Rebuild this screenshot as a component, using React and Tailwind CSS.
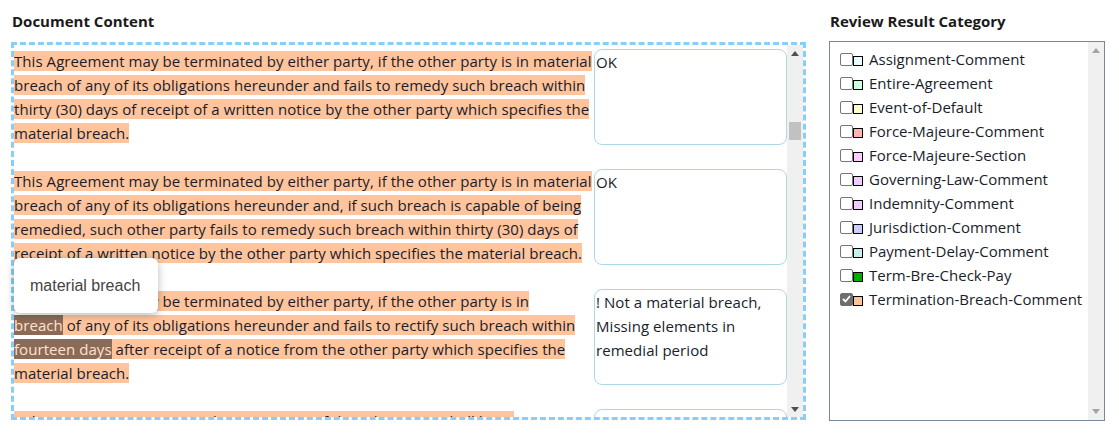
import React from "react";

const paragraphs = [
  {
    lines: [
      [{ t: "This Agreement may be terminated by either party, if the other party is in material" }],
      [{ t: "breach of any of its obligations hereunder and fails to remedy such breach within" }],
      [{ t: "thirty (30) days of receipt of a written notice by the other party which specifies the" }],
      [{ t: "material breach." }],
    ],
    comment: "OK",
  },
  {
    lines: [
      [{ t: "This Agreement may be terminated by either party, if the other party is in material" }],
      [{ t: "breach of any of its obligations hereunder and, if such breach is capable of being" }],
      [{ t: "remedied, such other party fails to remedy such breach within thirty (30) days of" }],
      [{ t: "receipt of a written notice by the other party which specifies the material breach." }],
    ],
    comment: "OK",
  },
  {
    lines: [
      [{ t: "This Agreement may be terminated by either party, if the other party is in" }],
      [
        { t: "breach", mark: true },
        { t: " of any of its obligations hereunder and fails to rectify such breach within" },
      ],
      [
        { t: "fourteen days", mark: true },
        { t: " after receipt of a notice from the other party which specifies the" },
      ],
      [{ t: "material breach." }],
    ],
    comment: "! Not a material breach,\nMissing elements in\nremedial period",
  },
  {
    lines: [
      [{ t: "Either party may terminate this Agreement if the other party shall be in" }],
      [{ t: "material breach of any of its obligations under this Agreement and fails to" }],
    ],
    comment: "! Not a material breach, Missing\nelements in",
  },
];

const categories = [
  { name: "Assignment-Comment", color: "#e6ffff" },
  { name: "Entire-Agreement", color: "#ccffdd" },
  { name: "Event-of-Default", color: "#ffffcc" },
  { name: "Force-Majeure-Comment", color: "#ffb3b3" },
  { name: "Force-Majeure-Section", color: "#ffccff" },
  { name: "Governing-Law-Comment", color: "#eeccff" },
  { name: "Indemnity-Comment", color: "#f3ccff" },
  { name: "Jurisdiction-Comment", color: "#ccccff" },
  { name: "Payment-Delay-Comment", color: "#c6efef" },
  { name: "Term-Bre-Check-Pay", color: "#00aa00" },
  { name: "Termination-Breach-Comment", color: "#ffc499", checked: true },
];

const Arrow = ({ up, color }) => (
  <svg width="8" height="5" viewBox="0 0 8 5">
    <path d={up ? "M0 5 L4 0 L8 5 Z" : "M0 0 L4 5 L8 0 Z"} fill={color} />
  </svg>
);

const Paragraph = ({ p }) => (
  <div className="flex h-[96px] mb-[24px] shrink-0">
    <div className="w-[580px] shrink-0 whitespace-nowrap leading-[24px] tracking-[0.06px]">
      {p.lines.map((line, i) => (
        <div key={i} className="h-[24px]">
          {line.map((s, j) =>
            s.mark ? (
              <span key={j} className="bg-[#8c6a58] text-[#ffe2cf]">
                {s.t}
              </span>
            ) : (
              <span key={j} className="bg-[#ffc49b]">
                {s.t}
              </span>
            )
          )}
        </div>
      ))}
    </div>
    <textarea
      readOnly
      value={p.comment}
      className="w-[193px] h-[96px] shrink-0 resize-none overflow-hidden rounded-[8px] border border-[#add8e6] px-[1px] py-0 leading-[24px] tracking-[0.06px] text-[#1a1d2b] outline-none"
    />
  </div>
);

export default function App() {
  return (
    <div className="flex w-[1119px] h-[434px] bg-white pt-[11px] font-['Open_Sans',sans-serif] text-[15px] text-[#1a1d2b]">
      {/* Document */}
      <div className="ml-[11px] w-[795px] shrink-0">
        <div className="h-5 leading-5 pl-[1px] font-bold text-[#1a1a1a]">Document Content</div>
        <div className="relative mt-[11px] flex h-[378px] border-[3px] border-dashed border-[#87cefa]">
          <div className="flex-1 flex flex-col overflow-hidden pt-[4px]">
            {paragraphs.map((p, i) => (
              <Paragraph key={i} p={p} />
            ))}
          </div>
          <div className="w-[16px] shrink-0 bg-[#f0f0f0] flex flex-col items-center">
            <div className="h-[16px] flex items-center justify-center">
              <Arrow up color="#505050" />
            </div>
            <div className="mt-[61px] h-[18px] w-[12px] bg-[#c1c1c1]" />
            <div className="flex-1" />
            <div className="h-[16px] flex items-center justify-center">
              <Arrow color="#505050" />
            </div>
          </div>
          {/* hover tooltip */}
          <div className="absolute left-0 top-[213px] w-[144px] h-[55px] rounded-[6px] bg-white shadow-[0_2px_8px_rgba(0,0,0,0.28)] flex items-center pl-[16px] font-['Liberation_Sans',Arial,sans-serif] text-[16px] text-[#444]">
            material breach
          </div>
        </div>
      </div>

      {/* Categories */}
      <div className="ml-[23px] w-[276px] shrink-0">
        <div className="h-5 leading-5 pl-[1px] font-bold text-[#1a1a1a]">Review Result Category</div>
        <div className="mt-[10px] flex h-[380px] border border-[#7a8896]">
          <div className="flex-1 pt-[5px] pl-[10px]">
            {categories.map((c) => (
              <div key={c.name} className="flex items-center h-[24px] leading-[24px]">
                <span
                  className={`w-[13px] h-[13px] rounded-[2px] border flex items-center justify-center ${
                    c.checked ? "bg-[#6e6e6e] border-[#6e6e6e]" : "bg-white border-[#767676]"
                  }`}
                >
                  {c.checked && (
                    <svg width="9" height="8" viewBox="0 0 9 8">
                      <path d="M1 4 L3.5 6.5 L8 1" stroke="white" strokeWidth="1.8" fill="none" />
                    </svg>
                  )}
                </span>
                <span
                  className="mt-[3px] w-[10px] h-[10px] border border-black"
                  style={{ backgroundColor: c.color }}
                />
                <span className="ml-[6px] whitespace-nowrap">{c.name}</span>
              </div>
            ))}
          </div>
          <div className="w-[16px] shrink-0 bg-[#f0f0f0] flex flex-col items-center justify-between">
            <div className="h-[17px] flex items-center justify-center">
              <Arrow up color="#a3a3a3" />
            </div>
            <div className="h-[17px] flex items-center justify-center">
              <Arrow color="#a3a3a3" />
            </div>
          </div>
        </div>
      </div>
    </div>
  );
}
